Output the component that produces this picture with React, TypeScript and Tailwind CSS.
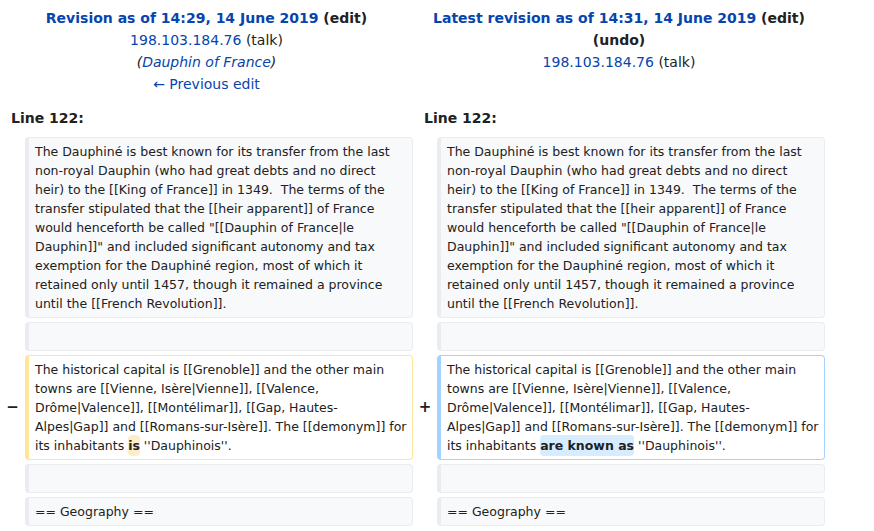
const link = 'text-[#0645ad]';

const firstPara =
  'The Dauphiné is best known for its transfer from the last non-royal Dauphin (who had great debts and no direct heir) to the [[King of France]] in 1349.  The terms of the transfer stipulated that the [[heir apparent]] of France would henceforth be called "[[Dauphin of France|le Dauphin]]" and included significant autonomy and tax exemption for the Dauphiné region, most of which it retained only until 1457, though it remained a province until the [[French Revolution]].';

const capitalStart =
  "The historical capital is [[Grenoble]] and the other main towns are [[Vienne, Isère|Vienne]], [[Valence, Drôme|Valence]], [[Montélimar]], [[Gap, Hautes-Alpes|Gap]] and [[Romans-sur-Isère]]. The [[demonym]] for its inhabitants ";

function Context({ children }: { children?: React.ReactNode }) {
  return (
    <div className="min-h-[29px] whitespace-pre-wrap rounded-[4px] border border-l-4 border-[#eaecf0] bg-[#f8f9fa] px-[6px] py-[4px]">
      {children}
    </div>
  );
}

function Marker({ sign }: { sign: string }) {
  return (
    <div className="flex items-center justify-center text-[15px] font-bold text-[#202122]">
      {sign}
    </div>
  );
}

export default function App() {
  return (
    <div
      className="min-h-[531px] bg-white text-[14px] text-[#202122]"
      style={{ fontFamily: '"DejaVu Sans", sans-serif' }}
    >
      <div className="grid w-[825px] grid-cols-[25px_388px_24px_388px] gap-y-[4px]">
        {/* revision headers */}
        <div className="col-span-2 pt-[7px] text-center leading-[22px]">
          <div className="font-bold">
            <span className={link}>Revision as of 14:29, 14 June 2019</span> (edit)
          </div>
          <div>
            <span className={link}>198.103.184.76</span> (talk)
          </div>
          <div className="italic">
            (<span className={link}>Dauphin of France</span>)
          </div>
          <div className={link}>← Previous edit</div>
        </div>
        <div className="col-span-2 pt-[7px] text-center leading-[22px]">
          <div className="font-bold">
            <span className={link}>Latest revision as of 14:31, 14 June 2019</span> (edit)
          </div>
          <div className="font-bold">(undo)</div>
          <div>
            <span className={link}>198.103.184.76</span> (talk)
          </div>
        </div>

        {/* line numbers */}
        <div className="col-span-2 pl-[11px] pt-[10px] pb-[5px] font-bold leading-[19px]">Line 122:</div>
        <div className="col-span-2 pl-[11px] pt-[10px] pb-[5px] font-bold leading-[19px]">Line 122:</div>

        {/* diff rows */}
        <div className="col-span-4 grid grid-cols-[25px_388px_24px_388px] gap-y-[4px] text-[12.5px] leading-[19px]">
          <div />
          <Context>{firstPara}</Context>
          <div />
          <Context>{firstPara}</Context>

          <div />
          <Context />
          <div />
          <Context />

          <Marker sign="−" />
          <div className="rounded-[4px] border border-l-4 border-[#ffe49c] bg-white py-[4px] pl-[6px] pr-[2px]">
            {capitalStart}
            <span className="rounded-[4px] bg-[#feeec8] py-[3px] font-bold">is</span> ''Dauphinois''.
          </div>
          <Marker sign="+" />
          <div className="rounded-[4px] border border-l-4 border-[#a3d3ff] bg-white py-[4px] pl-[6px] pr-[2px]">
            {capitalStart}
            <span className="rounded-[4px] bg-[#d8ecff] py-[3px] font-bold">are known as</span> ''Dauphinois''.
          </div>

          <div />
          <Context />
          <div />
          <Context />

          <div />
          <Context>== Geography ==</Context>
          <div />
          <Context>== Geography ==</Context>
        </div>
      </div>
    </div>
  );
}
